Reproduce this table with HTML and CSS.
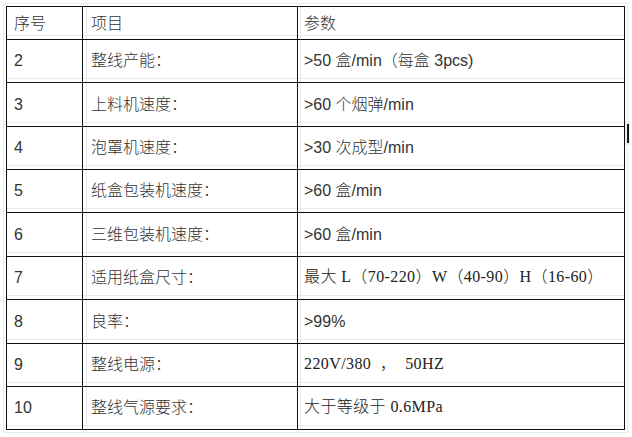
FILE: index.html
```html
<!DOCTYPE html>
<html lang="zh-CN">
<head>
<meta charset="utf-8">
<title>参数表</title>
<link rel="stylesheet" href="styles.css">
</head>
<body>
<div class="page">
  <div class="spec">
    <div class="cell c1 head">序号</div>
    <div class="cell c2 head">项目</div>
    <div class="cell c3 head">参数</div>

    <div class="cell c1">2</div>
    <div class="cell c2">整线产能：</div>
    <div class="cell c3">&gt;50 盒/min（每盒 3pcs)</div>

    <div class="cell c1">3</div>
    <div class="cell c2">上料机速度：</div>
    <div class="cell c3">&gt;60 个烟弹/min</div>

    <div class="cell c1">4</div>
    <div class="cell c2">泡罩机速度：</div>
    <div class="cell c3">&gt;30 次成型/min</div>

    <div class="cell c1">5</div>
    <div class="cell c2">纸盒包装机速度：</div>
    <div class="cell c3">&gt;60 盒/min</div>

    <div class="cell c1">6</div>
    <div class="cell c2">三维包装机速度：</div>
    <div class="cell c3">&gt;60 盒/min</div>

    <div class="cell c1">7</div>
    <div class="cell c2">适用纸盒尺寸：</div>
    <div class="cell c3 song">最大 L（70-220）W（40-90）H（16-60）</div>

    <div class="cell c1">8</div>
    <div class="cell c2">良率：</div>
    <div class="cell c3">&gt;99%</div>

    <div class="cell c1">9</div>
    <div class="cell c2">整线电源：</div>
    <div class="cell c3 song">220V/380  ，  50HZ</div>

    <div class="cell c1">10</div>
    <div class="cell c2">整线气源要求：</div>
    <div class="cell c3 song">大于等级于 0.6MPa</div>
  </div>
  <div class="caret"></div>
</div>
</body>
</html>
```

FILE: styles.css
```css
* { box-sizing: border-box; }

html, body {
  margin: 0;
  padding: 0;
  background: #ffffff;
}

.page {
  position: relative;
  width: 632px;
  height: 437px;
  padding: 6px 0 0 6px;
}

.spec {
  display: grid;
  grid-template-columns: 76px 215px 327px;
  grid-template-rows: 33px 43px 44px 43px 43px 44px 43px 44px 43px 43px;
  width: 619px;
  border-top: 1px solid #111;
  border-left: 1px solid #111;
  font-family: "Liberation Sans", "Noto Sans CJK SC", sans-serif;
  font-size: 16px;
  font-weight: 300;
  color: #333333;
  outline: 1px solid #ececec;
  outline-offset: 2px;
}

.cell {
  display: flex;
  align-items: center;
  border-right: 1px solid #111;
  border-bottom: 1px solid #111;
  white-space: pre;
  line-height: 1;
  background:
    linear-gradient(#e9e9e9, #e9e9e9) left 0 bottom 3px / 100% 1px no-repeat;
}

.cell.head {
  padding-top: 2px;
}

.c1 { padding-left: 7px; }

.c2 {
  padding-left: 8px;
  background:
    linear-gradient(#e9e9e9, #e9e9e9) left 3px top 0 / 1px 100% no-repeat,
    linear-gradient(#e9e9e9, #e9e9e9) left 0 bottom 3px / 100% 1px no-repeat;
}

.c3 {
  padding-left: 6px;
  background:
    linear-gradient(#e9e9e9, #e9e9e9) left 2px top 0 / 1px 100% no-repeat,
    linear-gradient(#e9e9e9, #e9e9e9) left 0 bottom 3px / 100% 1px no-repeat;
}

.song {
  font-family: "Liberation Serif", "Noto Sans CJK SC", serif;
  letter-spacing: 0.4px;
  color: #222222;
  padding-bottom: 3px;
}

.caret {
  position: absolute;
  left: 625px;
  top: 121px;
  width: 5px;
  height: 24px;
  background: #eeeeee;
}

.caret::after {
  content: "";
  position: absolute;
  left: 2px;
  top: 3px;
  width: 2px;
  height: 19px;
  background: #1a1a1a;
}
```
